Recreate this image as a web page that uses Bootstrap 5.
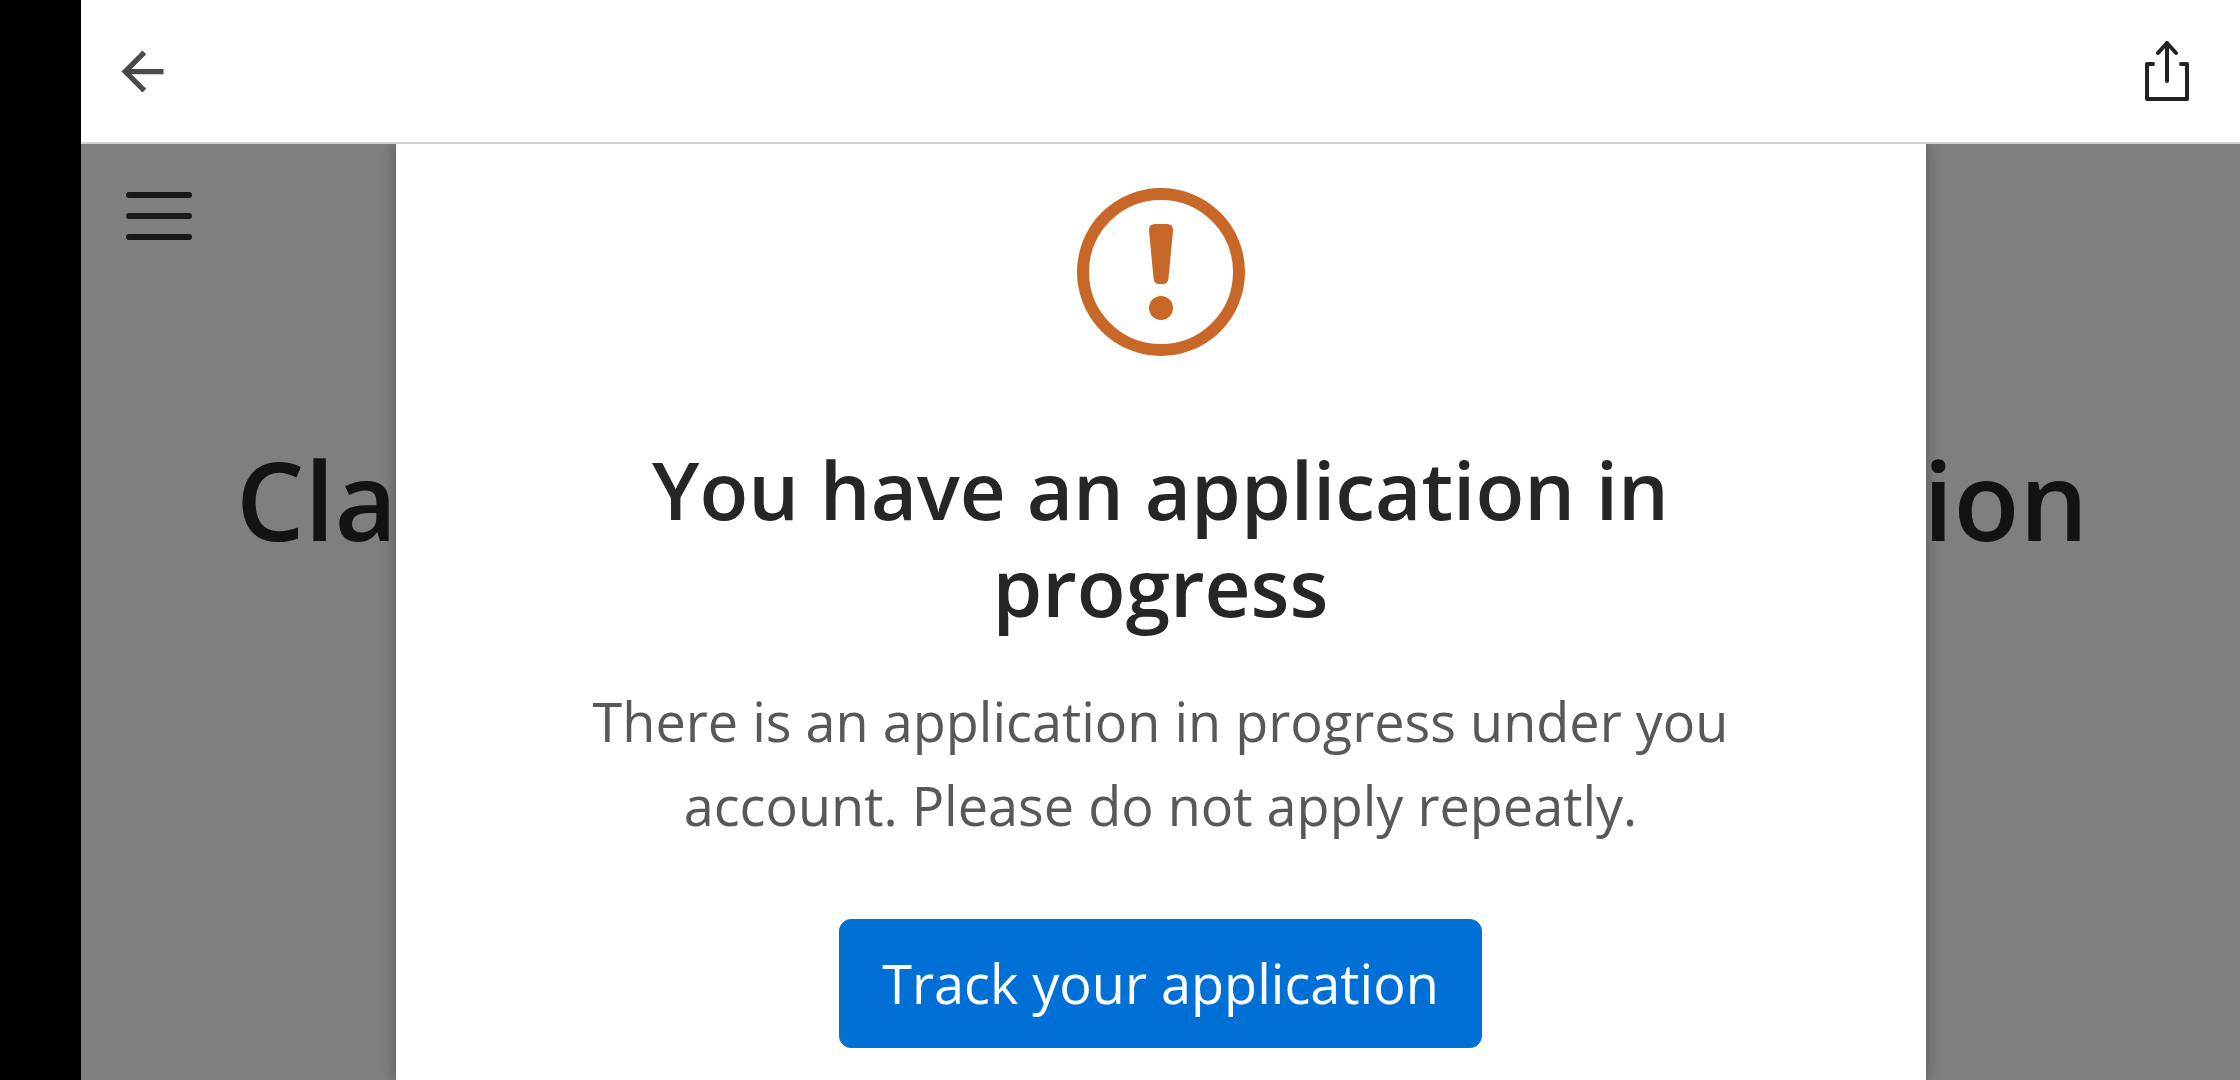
<!DOCTYPE html>
<html lang="en">
<head>
<meta charset="utf-8">
<meta name="viewport" content="width=device-width, initial-scale=1">
<title>Application in progress</title>
<link href="https://cdn.jsdelivr.net/npm/bootstrap@5.3.0/dist/css/bootstrap.min.css" rel="stylesheet">
<style>
  body { font-family: "Open Sans", "Noto Sans", sans-serif; background: #fff; }
  .side-strip { width: 81px; background: #000; }
  .top-bar { height: 144px; padding: 0 51px 0 30px; border-bottom: 2px solid #d3d3d3; }
  .menu-button { margin: 48px 45px 0; }
  .page-title { margin: 190px 152px 0 155px; font-size: 108px; line-height: 140px; font-weight: 600; color: #262626; }
  .backdrop { background: rgba(0, 0, 0, .5); }
  .dialog-panel { width: 1530px; max-width: 100%; background: #fff; padding: 44px 168px 56px; box-shadow: 0 0 14px rgba(0, 0, 0, .35); }
  .dialog-title { margin: 84px 0 45px; font-size: 80px; line-height: 97px; font-weight: 600; color: #262626; }
  .dialog-text { margin: 0 0 72px; font-size: 54px; line-height: 84px; color: #585858; }
  .track-button { --bs-btn-bg: #0070d6; --bs-btn-border-color: #0070d6; --bs-btn-padding-x: 42px; --bs-btn-padding-y: 21px; --bs-btn-font-size: 54px; --bs-btn-line-height: 85px; --bs-btn-border-radius: 12px; }
</style>
<script src="https://cdn.jsdelivr.net/npm/bootstrap@5.3.0/dist/js/bootstrap.bundle.min.js"></script>
</head>
<body>
<div class="d-flex vh-100 overflow-hidden">
  <div class="side-strip flex-shrink-0"></div>
  <div class="d-flex flex-column flex-grow-1">
    <header class="top-bar d-flex flex-shrink-0 justify-content-between align-items-center">
      <button type="button" class="btn border-0 p-0 d-flex" aria-label="Back">
        <svg width="63" height="63" viewBox="0 0 24 24" fill="#4a4a4a"><path d="M20 11H7.83l5.59-5.59L12 4l-8 8 8 8 1.41-1.41L7.83 13H20v-2z"/></svg>
      </button>
      <button type="button" class="btn border-0 p-0 d-flex" aria-label="Share">
        <svg width="44" height="60" viewBox="0 0 44 60" fill="none" stroke="#222" stroke-width="4" stroke-linecap="round"><path d="M8 23H2V58H42V23H36M22 40V2M13 12L22 2L31 12" stroke-linejoin="round"/></svg>
      </button>
    </header>
    <main class="position-relative flex-grow-1 overflow-hidden">
      <button type="button" class="menu-button btn border-0 p-0 d-flex" aria-label="Menu">
        <svg width="66" height="48" viewBox="0 0 66 48" stroke="#323232" stroke-width="6" stroke-linecap="round"><path d="M3 3H63M3 24H63M3 45H63"/></svg>
      </button>
      <h1 class="page-title d-flex justify-content-between"><span>Cla</span><span>ion</span></h1>
      <div class="backdrop position-absolute top-0 start-0 w-100 h-100 d-flex justify-content-center">
        <section class="dialog-panel text-center flex-shrink-0" role="dialog" aria-labelledby="dialog-heading">
          <svg class="d-block mx-auto" width="168" height="168" viewBox="0 0 168 168" fill="#c86828"><circle cx="84" cy="84" r="78" fill="none" stroke="#c86828" stroke-width="12"/><path d="M78 36H90Q96.500 36 96 43L91.500 90Q91 96 86 96H82Q77 96 76.500 90L72 43Q71.500 36 78 36Z"/><circle cx="84" cy="120" r="12"/></svg>
          <h2 class="dialog-title" id="dialog-heading">You have an application in progress</h2>
          <p class="dialog-text">There is an application in progress under you account. Please do not apply repeatly.</p>
          <button type="button" class="track-button btn btn-primary">Track your application</button>
        </section>
      </div>
    </main>
  </div>
</div>
</body>
</html>
